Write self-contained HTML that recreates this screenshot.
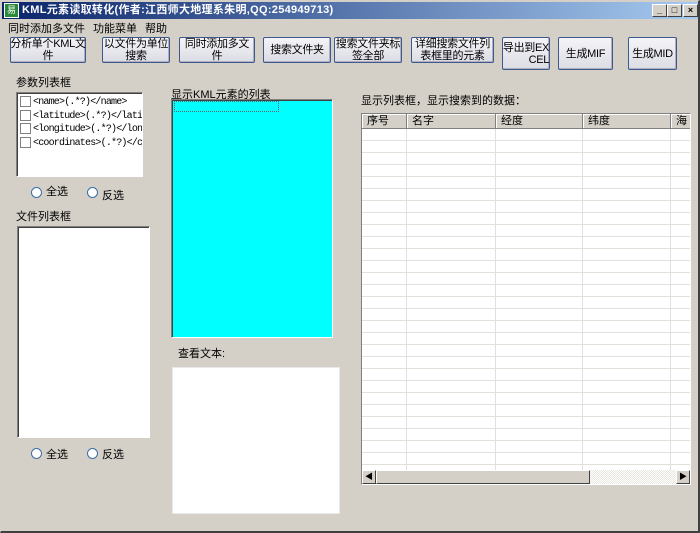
<!DOCTYPE html>
<html><head><meta charset="utf-8"><style>
*{margin:0;padding:0;box-sizing:border-box}
body{width:700px;height:533px;background:#d4d0c8;font-family:"Liberation Sans","Noto Sans CJK SC","WenQuanYi Zen Hei",sans-serif;font-size:11px;color:#000;position:relative;overflow:hidden}
.a{position:absolute}
.win{left:0;top:0;width:700px;height:533px;border:1px solid #d4d0c8;border-right:2px solid #404040;border-bottom:2px solid #404040}
.title{left:2px;top:2px;width:696px;height:17px;background:linear-gradient(90deg,#0a246a,#a6caf0);color:#fff;font-weight:bold;font-size:11px;line-height:17px;padding-left:20px;white-space:nowrap;letter-spacing:0.3px}
.ico{left:4px;top:3px;width:15px;height:15px;background:#2a8a3a;border:1px solid #fff;color:#fff;font-size:9px;line-height:13px;text-align:center}
.tb{top:4px;width:15px;height:13px;background:#d4d0c8;border:1px solid;border-color:#fff #404040 #404040 #fff;font-size:9px;line-height:11px;text-align:center;color:#000;font-weight:bold}
.btn{background:linear-gradient(#f4f4f8,#dcdce4);border:1px solid #3c5a8c;border-radius:2px;font-size:11px;line-height:12px;text-align:center;display:flex;align-items:center;justify-content:center;box-shadow:inset -1px -1px 0 #b0b0c0;white-space:nowrap;letter-spacing:-0.3px}
.sunk{border:1px solid;border-color:#808080 #fff #fff #808080;box-shadow:inset 1px 1px 0 #404040}
.lb{font-size:11px;white-space:nowrap}
.radio{width:11px;height:11px;border:1px solid #3a6ea5;border-radius:50%;background:#fff}
.cb{width:11px;height:11px;border:1px solid #808080;background:#fff;display:inline-block;vertical-align:middle;margin-right:2px}
.li{font-family:"Liberation Mono",monospace;font-size:10px;line-height:12.5px;white-space:nowrap;overflow:hidden;letter-spacing:-0.8px}
.hd{top:0;height:15px;border-right:1px solid #808080;border-bottom:1px solid #808080;background:#d4d0c8;box-shadow:inset 1px 1px 0 #fff;padding-left:5px;line-height:14px}
</style></head><body>
<div class="a win"></div>
<div class="a title">KML元素读取转化(作者:江西师大地理系朱明,QQ:254949713)</div>
<div class="a ico">易</div>
<div class="a tb" style="left:652px">_</div>
<div class="a tb" style="left:667px">□</div>
<div class="a tb" style="left:683px">×</div>
<div class="a lb" style="left:8px;top:20px">同时添加多文件</div>
<div class="a lb" style="left:93px;top:20px">功能菜单</div>
<div class="a lb" style="left:145px;top:20px">帮助</div>

<div class="a btn" style="left:10px;top:37px;width:76px;height:26px">分析单个KML文<br>件</div>
<div class="a btn" style="left:102px;top:37px;width:68px;height:26px">以文件为单位<br>搜索</div>
<div class="a btn" style="left:179px;top:37px;width:76px;height:26px">同时添加多文<br>件</div>
<div class="a btn" style="left:263px;top:37px;width:68px;height:26px">搜索文件夹</div>
<div class="a btn" style="left:334px;top:37px;width:68px;height:26px">搜索文件夹标<br>签全部</div>
<div class="a btn" style="left:411px;top:37px;width:83px;height:26px">详细搜索文件列<br>表框里的元素</div>
<div class="a btn" style="left:502px;top:37px;width:48px;height:33px;text-align:right">导出到EX<br>&nbsp;&nbsp;&nbsp;&nbsp;CEL</div>
<div class="a btn" style="left:558px;top:37px;width:55px;height:33px">生成MIF</div>
<div class="a btn" style="left:628px;top:37px;width:49px;height:33px">生成MID</div>

<div class="a lb" style="left:16px;top:74px">参数列表框</div>
<div class="a sunk" style="left:16px;top:92px;width:127px;height:85px;background:#fff;padding:3px 0 0 3px">
<div class="li"><span class="cb"></span>&lt;name&gt;(.*?)&lt;/name&gt;</div>
<div class="li"><span class="cb"></span>&lt;latitude&gt;(.*?)&lt;/lati</div>
<div class="li"><span class="cb"></span>&lt;longitude&gt;(.*?)&lt;/lon</div>
<div class="li"><span class="cb"></span>&lt;coordinates&gt;(.*?)&lt;/c</div>
</div>
<div class="a radio" style="left:31px;top:187px"></div><div class="a lb" style="left:46px;top:183px">全选</div>
<div class="a radio" style="left:87px;top:187px"></div><div class="a lb" style="left:102px;top:187px">反选</div>
<div class="a lb" style="left:16px;top:208px">文件列表框</div>
<div class="a sunk" style="left:17px;top:226px;width:133px;height:212px;background:#fff"></div>
<div class="a radio" style="left:31px;top:448px"></div><div class="a lb" style="left:46px;top:446px">全选</div>
<div class="a radio" style="left:87px;top:448px"></div><div class="a lb" style="left:102px;top:446px">反选</div>

<div class="a lb" style="left:171px;top:86px">显示KML元素的列表</div>
<div class="a sunk" style="left:171px;top:99px;width:162px;height:239px;background:#0ff"></div>
<div class="a" style="left:174px;top:101px;width:105px;height:11px;border:1px dotted #666"></div>
<div class="a lb" style="left:178px;top:345px">查看文本:</div>
<div class="a" style="left:172px;top:367px;width:168px;height:147px;background:#fff;border:1px solid #e8e8e8"></div>

<div class="a lb" style="left:361px;top:92px">显示列表框，显示搜索到的数据：</div>
<div class="a sunk" style="left:361px;top:113px;width:330px;height:372px;background:#fff;overflow:hidden">
 <div class="a" style="left:0;top:15px;width:330px;height:342px;background:repeating-linear-gradient(#fff 0 11px,#e2e0da 11px 12px)"></div>
 <div class="a" style="left:44px;top:15px;width:1px;height:342px;background:#e2e0da"></div>
 <div class="a" style="left:133px;top:15px;width:1px;height:342px;background:#e2e0da"></div>
 <div class="a" style="left:220px;top:15px;width:1px;height:342px;background:#e2e0da"></div>
 <div class="a" style="left:308px;top:15px;width:1px;height:342px;background:#e2e0da"></div>
 <div class="a hd" style="left:0;width:45px">序号</div>
 <div class="a hd" style="left:45px;width:89px">名字</div>
 <div class="a hd" style="left:134px;width:87px">经度</div>
 <div class="a hd" style="left:221px;width:88px">纬度</div>
 <div class="a hd" style="left:309px;width:30px">海</div>
 <div class="a" style="left:0;top:356px;width:330px;height:14px;background:repeating-conic-gradient(#e8e6e0 0 25%,#fff 0 50%) 0 0/2px 2px"></div>
 <div class="a" style="left:14px;top:356px;width:214px;height:14px;background:#d4d0c8;border:1px solid;border-color:#fff #404040 #404040 #fff"></div>
 <div class="a" style="left:0;top:356px;width:14px;height:14px;background:#d4d0c8;border:1px solid;border-color:#fff #404040 #404040 #fff;font-size:8px;line-height:12px;text-align:center">◀</div>
 <div class="a" style="left:314px;top:356px;width:14px;height:14px;background:#d4d0c8;border:1px solid;border-color:#fff #404040 #404040 #fff;font-size:8px;line-height:12px;text-align:center">▶</div>
</div>
</body></html>
